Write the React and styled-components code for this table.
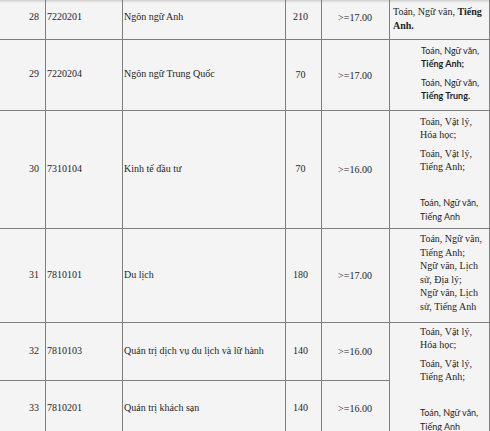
import React from 'react';
import styled, { createGlobalStyle } from 'styled-components';

const GlobalStyle = createGlobalStyle`
  html, body {
    margin: 0;
    padding: 0;
    background: #f4f4f4;
  }
`;

const rows = [
  { stt: 28, code: '7220201', name: 'Ngôn ngữ Anh', quota: 210, score: '>=17.00', h: 44, subj: 'anh' },
  { stt: 29, code: '7220204', name: 'Ngôn ngữ Trung Quốc', quota: 70, score: '>=17.00', h: 71, subj: 'trung' },
  { stt: 30, code: '7310104', name: 'Kinh tế đầu tư', quota: 70, score: '>=16.00', h: 118, subj: 'mix' },
  { stt: 31, code: '7810101', name: 'Du lịch', quota: 180, score: '>=17.00', h: 94, subj: 'dulich' },
  { stt: 32, code: '7810103', name: 'Quản trị dịch vụ du lịch và lữ hành', quota: 140, score: '>=16.00', h: 58, subj: 'mix2' },
  { stt: 33, code: '7810201', name: 'Quản trị khách sạn', quota: 140, score: '>=16.00', h: 56, subj: null },
];

const Page = styled.div`
  width: 490px;
  height: 431px;
  overflow: hidden;
  background: #f4f4f4;
  box-shadow: inset 0 3px 3px -2px rgba(0, 0, 0, 0.2);
`;

const Table = styled.table`
  border-collapse: collapse;
  table-layout: fixed;
  width: 490px;
  margin: -5px 0 0 -1px;
  font-family: "Liberation Serif", "Times New Roman", serif;
  font-size: 10px;
  color: #1f1f1f;
`;

const Col = styled.col`
  width: ${(p) => p.$w}px;
`;

const Row = styled.tr`
  height: ${(p) => p.$h}px;
`;

const Cell = styled.td`
  border: 1px solid #7e7e7e;
  padding: 0 ${(p) => p.$pr || 0}px ${(p) => p.$pb || 0}px ${(p) => p.$pl || 1}px;
  vertical-align: middle;
  text-align: ${(p) => p.$align || 'left'};
  white-space: nowrap;
`;

const SubjectCell = styled.td`
  border: 1px solid #7e7e7e;
  vertical-align: top;
  padding: ${(p) => p.$top}px 2px 0 ${(p) => p.$left}px;
  line-height: ${(p) => p.$lh || 13.3}px;
  white-space: nowrap;
`;

const Para = styled.p`
  margin: 0;
  min-height: 13.3px;
  font-family: ${(p) => (p.$sans ? '"Lato", "Liberation Sans", sans-serif' : 'inherit')};
  font-size: ${(p) => (p.$sans ? '9px' : 'inherit')};

  & + & {
    margin-top: 5px;
  }
`;

const Bold = styled.b`
  font-weight: 700;
`;

const Subjects = ({ kind }) => {
  if (kind === 'anh') {
    return (
      <SubjectCell $top={9} $left={3} $lh={14}>
        Toán, Ngữ văn, <Bold>Tiếng</Bold>
        <br />
        <Bold>Anh.</Bold>
      </SubjectCell>
    );
  }
  if (kind === 'trung') {
    return (
      <SubjectCell $top={4} $left={31}>
        <Para $sans>
          Toán, Ngữ văn,
          <br />
          <Bold>Tiếng Anh;</Bold>
        </Para>
        <Para $sans>
          Toán, Ngữ văn,
          <br />
          <Bold>Tiếng Trung.</Bold>
        </Para>
      </SubjectCell>
    );
  }
  if (kind === 'dulich') {
    return (
      <SubjectCell $top={3} $left={30} $lh={13.6}>
        Toán, Ngữ văn,
        <br />
        Tiếng Anh;
        <br />
        Ngữ văn, Lịch
        <br />
        sử, Địa lý;
        <br />
        Ngữ văn, Lịch
        <br />
        sử, Tiếng Anh
      </SubjectCell>
    );
  }
  // mix / mix2: three groups, the last one in a sans face
  return (
    <SubjectCell $top={kind === 'mix' ? 4 : 2} $left={30} rowSpan={kind === 'mix2' ? 2 : 1}>
      <Para>
        Toán, Vật lý,
        <br />
        Hóa học;
      </Para>
      <Para>
        Toán, Vật lý,
        <br />
        Tiếng Anh;
      </Para>
      <Para />
      <Para $sans>
        Toán, Ngữ văn,
        <br />
        Tiếng Anh
      </Para>
    </SubjectCell>
  );
};

export default function App() {
  return (
    <Page>
      <GlobalStyle />
      <Table>
        <colgroup>
          <Col $w={46} />
          <Col $w={77} />
          <Col $w={163} />
          <Col $w={36} />
          <Col $w={68} />
          <Col $w={100} />
        </colgroup>
        <tbody>
          {rows.map((r) => (
            <Row key={r.stt} $h={r.h}>
              <Cell $align="right" $pr={6} $pb={3}>{r.stt}</Cell>
              <Cell $pb={3}>{r.code}</Cell>
              <Cell $pb={3}>{r.name}</Cell>
              <Cell $align="center" $pr={7} $pb={2}>{r.quota}</Cell>
              <Cell $align="center" $pr={2}>{r.score}</Cell>
              {r.subj && <Subjects kind={r.subj} />}
            </Row>
          ))}
        </tbody>
      </Table>
    </Page>
  );
}
